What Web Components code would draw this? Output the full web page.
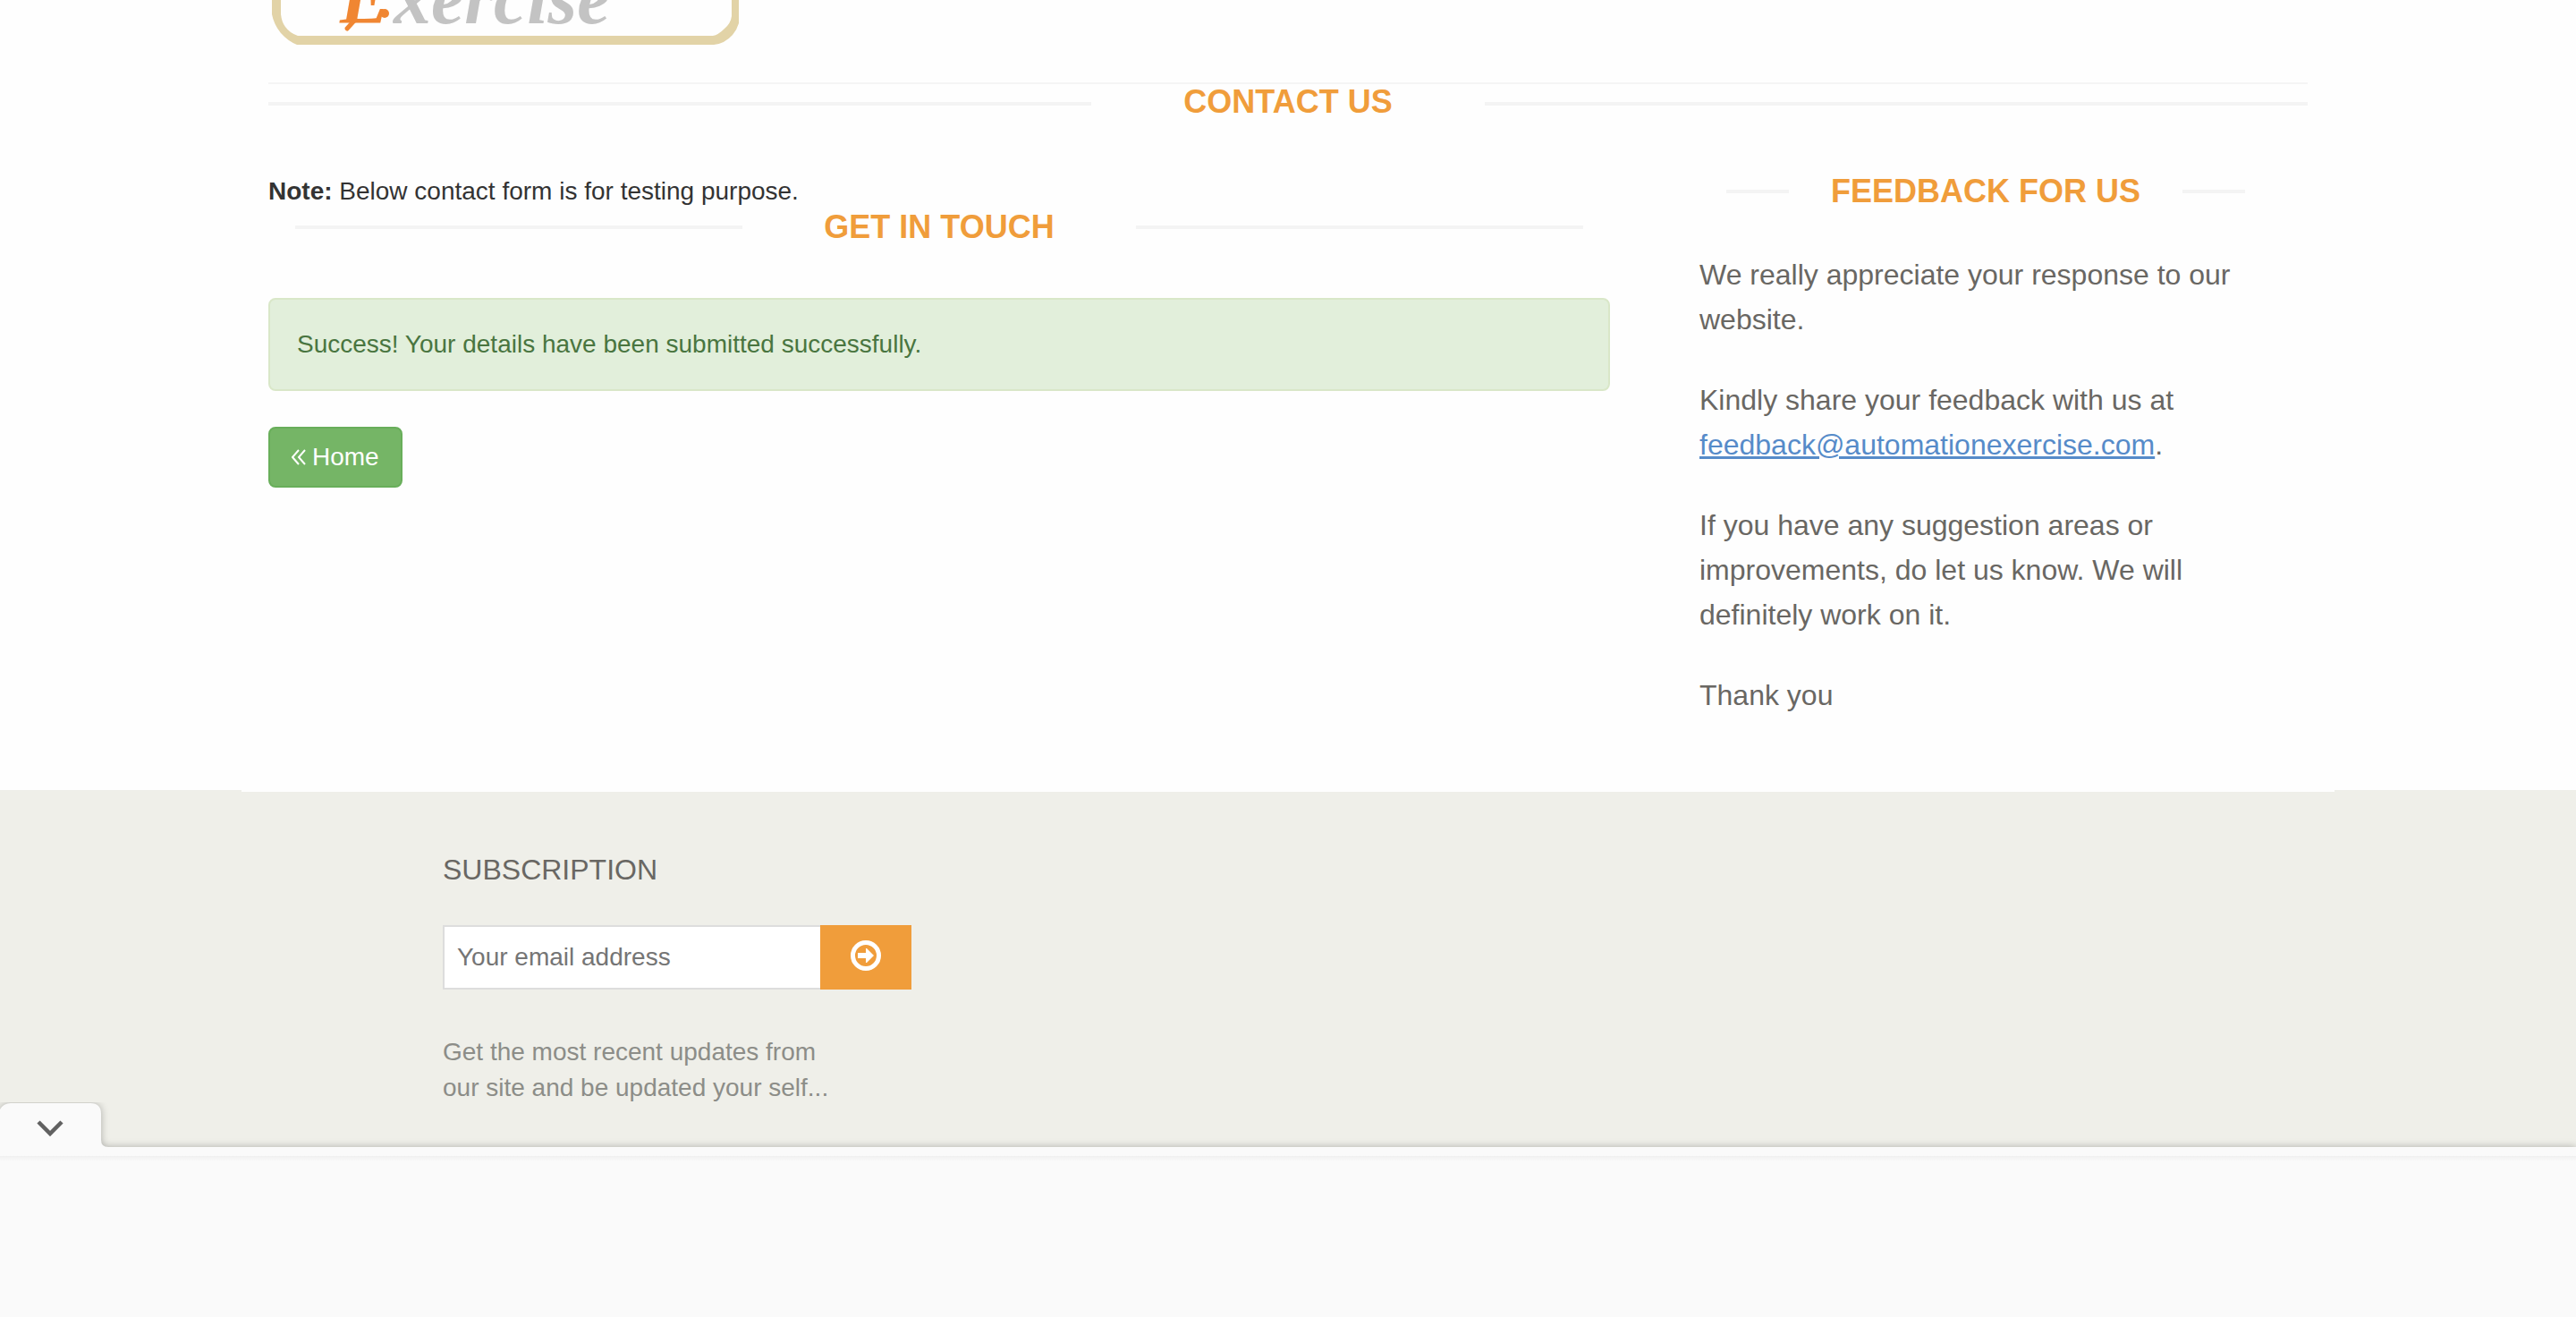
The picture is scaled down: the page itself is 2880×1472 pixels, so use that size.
<!DOCTYPE html>
<html lang="en">
<head>
<meta charset="utf-8">
<title>Automation Exercise - Contact Us</title>
<style>
  html, body { margin: 0; height: 100%; }
  body {
    background: #fefefe; color: #333; overflow: hidden;
    font: 28px/40px "Liberation Sans", Arial, sans-serif;
  }
</style>
</head>
<body>
<contact-page></contact-page>
<script>
const define = (name, html) => {
  const tpl = document.createElement('template');
  tpl.innerHTML = '<style>:host{display:block;box-sizing:border-box}*{box-sizing:border-box}</style>' + html;
  customElements.define(name, class extends HTMLElement {
    constructor() {
      super();
      this.attachShadow({ mode: 'open' }).append(tpl.content.cloneNode(true));
    }
  });
};

define('section-title', `
<style>
  :host { padding: 0 var(--inset, 30px); }
  h2 { margin: 0; display: flex; align-items: center; color: #f09d3b; font: bold 36px/40px "Liberation Sans", Arial, sans-serif; text-transform: uppercase; }
  h2::before, h2::after { content: ""; height: 4px; margin-top: var(--rule-drop, 0px); background: #f4f4f4; width: var(--rule, 500px); flex: none; }
  span { flex: 1; text-align: center; white-space: nowrap; }
</style>
<h2><span><slot></slot></span></h2>`);

define('site-logo', `
<style>
  :host { height: 92px; }
  svg { display: block; }
  text { font-family: "Liberation Serif", serif; font-style: italic; font-weight: bold; }
</style>
<svg width="526" height="52" viewBox="0 0 526 52" role="img" aria-label="Automation Exercise">
  <path d="M4 0V16Q6 27 14 37Q22 46 32 50H498Q510 49 519 39Q524 33 526 26V0H518V18Q517 26 510 32Q503 39 497 40H33Q24 37 19 30Q15 25 14 16V0Z" fill="#e2d3a7"/>
  <text x="80" y="26" font-size="84" fill="#f08632">E</text>
  <path d="M97 22L88 32" stroke="#f08632" stroke-width="5" stroke-linecap="round"/>
  <circle cx="130" cy="15" r="5" fill="#f08632"/>
  <text x="140" y="26" font-size="84" fill="#c3c3c3">xercise</text>
</svg>`);

define('alert-success', `
<style>
  :host { padding: 30px; border: 2px solid #d9e7c8; border-radius: 8px; background: #e2efdb; color: #497540; }
</style>
<div role="status"><slot></slot></div>`);

define('home-button', `
<style>
  a { display: inline-block; padding: 12px 24px; border: 2px solid #68ae5a; border-radius: 8px; background: #75b566; color: #fff; line-height: 40px; text-decoration: none; }
  svg { margin-right: 7px; }
</style>
<a href="#"><svg width="16" height="18" viewBox="0 0 16 18" fill="none" stroke="#fff" stroke-width="2"><path d="M8 1L1 9L8 17M15 1L8 9L15 17"/></svg>Home</a>`);

define('feedback-panel', `
<style>
  :host { padding: 0 40px; color: #696763; font-size: 32px; line-height: 50px; --rule: 70px; }
  p { margin: 0 0 40px; }
  section-title { margin-bottom: 48px; }
  a { color: #568bc9; text-decoration: underline; text-decoration-thickness: 3px; text-underline-offset: 2px; }
</style>
<section-title>Feedback For Us</section-title>
<p>We really appreciate your response to our website.</p>
<p>Kindly share your feedback with us at <a href="#">feedback@automationexercise.com</a>.</p>
<p>If you have any suggestion areas or improvements, do let us know. We will definitely work on it.</p>
<p>Thank you</p>`);

define('subscribe-footer', `
<style>
  :host { flex: 1; background: #efefe9; }
  .inner { width: 2340px; max-width: 100%; margin: 0 auto; border-top: 2px solid #fefefe; padding: 64px 225px 0; }
  h2 { margin: 0; font-size: 32px; line-height: 46px; font-weight: normal; text-transform: uppercase; color: #696763; }
  form { display: flex; margin: 39px 0 50px; }
  input { width: 422px; height: 72px; border: 2px solid #ddd; border-right: 0; border-radius: 0; padding: 0 14px; background: #fff; font: inherit; color: #333; outline: 0; }
  input::placeholder { color: #757575; opacity: 1; }
  button { width: 102px; height: 72px; border: 0; padding: 0 0 4px; background: #f09d3b; display: flex; align-items: center; justify-content: center; }
  p { margin: 0; color: #8c8d88; }
</style>
<div class="inner">
  <h2>Subscription</h2>
  <form>
    <input type="email" placeholder="Your email address" aria-label="Your email address">
    <button type="button" aria-label="Subscribe"><svg width="34" height="34" viewBox="0 0 34 34"><circle cx="17" cy="17" r="14.5" fill="none" stroke="#fff" stroke-width="5"/><path d="M8 14H17V9H18L26 17L18 25H17V20H8Z" fill="#fff"/></svg></button>
  </form>
  <p>Get the most recent updates from<br>our site and be updated your self...</p>
</div>`);

define('anchor-shelf', `
<style>
  :host { position: absolute; left: 0; right: 0; bottom: 0; clip-path: inset(0); }
  .shelf { filter: drop-shadow(0 0 4px rgba(0,0,0,.28)); }
  button { display: block; width: 130px; height: 50px; border: 0; padding: 0; background: none; }
  svg { display: block; }
  .ad { height: 190px; border-top: 10px solid #fafafa; background: linear-gradient(#f0f0f0, #fafafa 6px); }
</style>
<div class="shelf">
  <button type="button" aria-label="Collapse"><svg width="130" height="50" viewBox="0 0 130 50">
    <path d="M0 8Q4 1 12 1H101Q113 1 113 13V42Q113 50 121 50H0Z" fill="#fafafa"/>
    <path d="M43 22L56 35L69 22" fill="none" stroke="#616161" stroke-width="4.5"/>
  </svg></button>
  <div class="ad"></div>
</div>`);

define('contact-page', `
<style>
  :host { display: flex; flex-direction: column; height: 100%; position: relative; overflow: hidden; }
  main { width: 2340px; max-width: 100%; margin: 0 auto; padding: 0 30px 41px; }
  .page-title { border-top: 2px solid #f5f5f5; --inset: 0px; --rule: 920px; --rule-drop: 4px; }
  .columns { display: flex; gap: 60px; padding-top: 60px; }
  .form { flex: 1; }
  .note { margin: 0; }
  .form section-title { margin-bottom: 59px; }
  feedback-panel { width: 720px; }
  home-button { margin-top: 40px; }
</style>
<main>
  <site-logo></site-logo>
  <section-title class="page-title">Contact Us</section-title>
  <div class="columns">
    <div class="form">
      <p class="note"><b>Note:</b> Below contact form is for testing purpose.</p>
      <section-title>Get In Touch</section-title>
      <alert-success>Success! Your details have been submitted successfully.</alert-success>
      <home-button></home-button>
    </div>
    <feedback-panel></feedback-panel>
  </div>
</main>
<subscribe-footer></subscribe-footer>
<anchor-shelf></anchor-shelf>`);
</script>
</body>
</html>
